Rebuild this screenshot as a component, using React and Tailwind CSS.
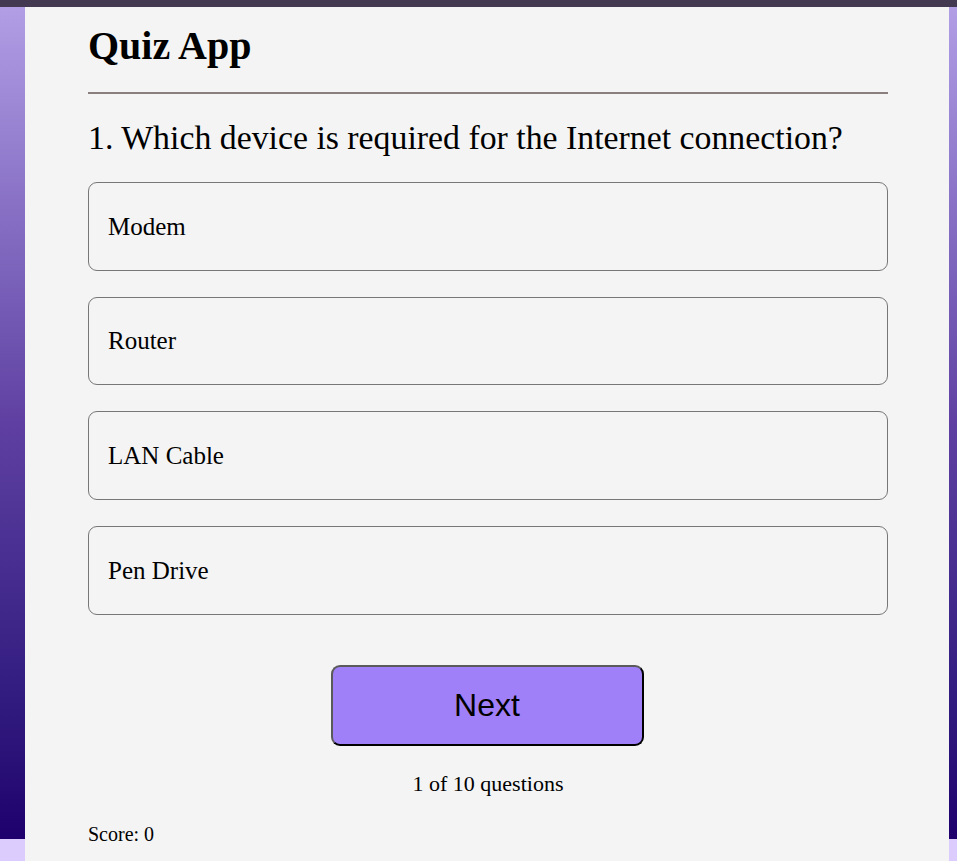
import React, { useState } from "react";

const questions = [
  {
    q: "Which device is required for the Internet connection?",
    options: ["Modem", "Router", "LAN Cable", "Pen Drive"],
  },
];

const App = () => {
  const [index] = useState(0);
  const [score] = useState(0);
  const current = questions[index];

  return (
    <div className="min-h-screen bg-[#dccbfd] font-['Liberation_Serif',serif] text-black">
      <div className="h-[7px] bg-[#433a52]" />
      <div className="h-[832px] bg-gradient-to-b from-[#b19ee5] via-[#5f40a2] to-[#1f006d] pl-[25px] pr-[8px]">
        <div className="bg-[#f4f4f4] h-[854px] pl-[63px] pr-[61px] pt-[16px]">
          <h1 className="text-[40px] font-bold leading-[46px]">Quiz App</h1>
          <hr className="mt-[23px] border-0 h-[2px] bg-[#8a7f7f]" />
          <h2 className="mt-[25px] text-[33.8px] leading-[37px]">
            {index + 1}. {current.q}
          </h2>
          <ul className="mt-[26px] flex flex-col gap-[26px]">
            {current.options.map((opt) => (
              <li
                key={opt}
                className="h-[88.7px] border border-[#777] rounded-[9px] flex items-center px-[19px] text-[25px]"
              >
                {opt}
              </li>
            ))}
          </ul>
          <div className="mt-[50px] flex justify-center pr-[2px]">
            <button className="w-[313px] h-[81px] bg-[#a080f8] rounded-[9px] border-2 border-t-[#5a5a5a] border-l-[#5a5a5a] border-b-black border-r-black font-['Liberation_Sans',sans-serif] text-[32px]">
              Next
            </button>
          </div>
          <p className="mt-[21px] text-center text-[22px] leading-[33px]">
            {index + 1} of 10 questions
          </p>
          <p className="mt-[19px] text-[20px] leading-[30px]">Score: {score}</p>
        </div>
      </div>
    </div>
  );
};

export default App;
